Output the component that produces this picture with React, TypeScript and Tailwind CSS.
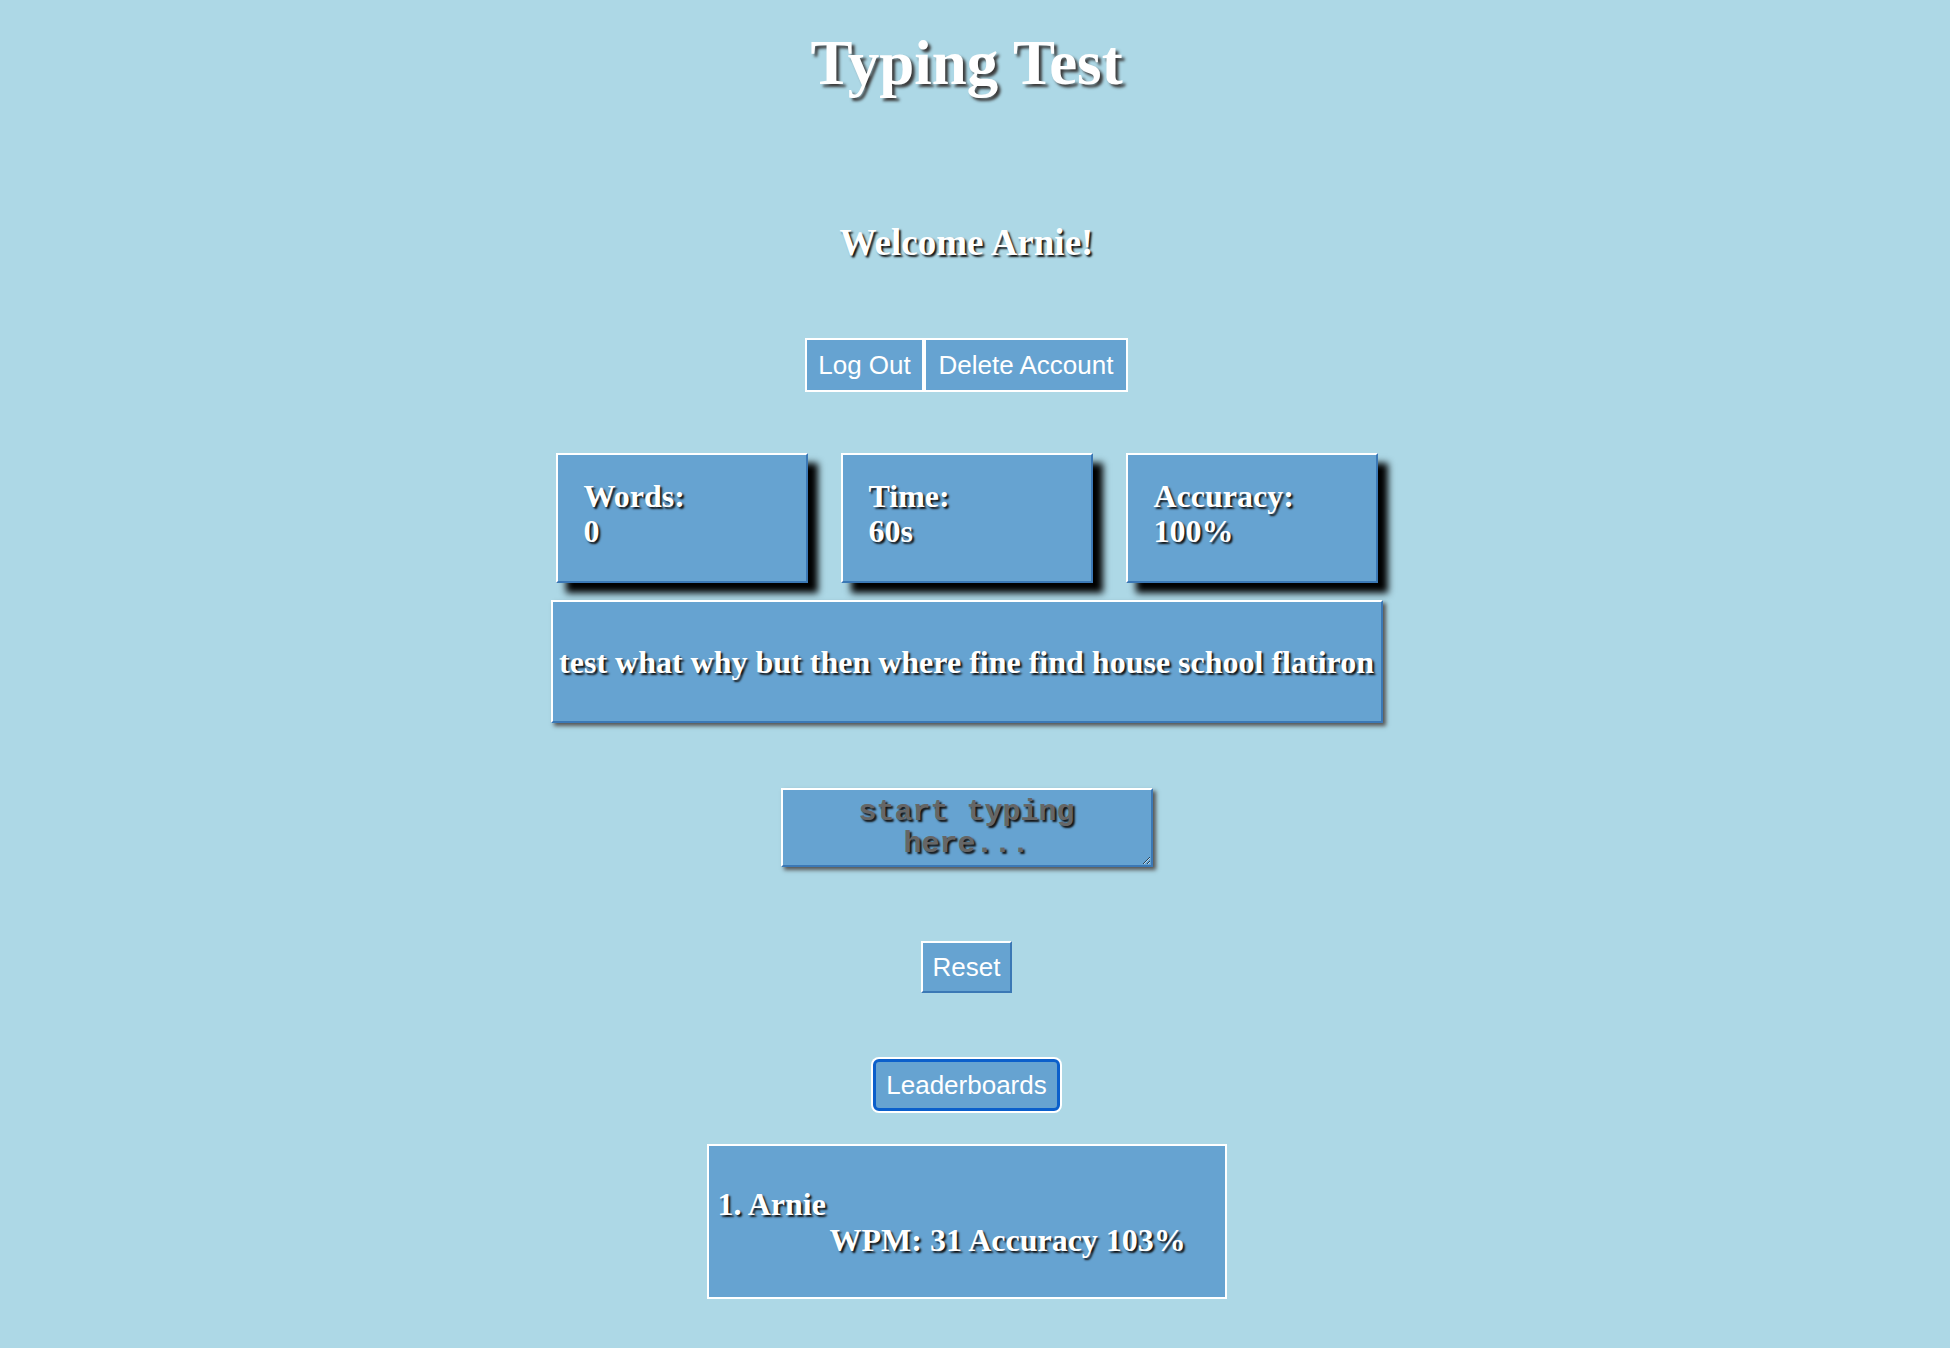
import { useState } from "react";

interface Score {
  name: string;
  wpm: number;
  accuracy: number;
}

const serif = "font-['Liberation_Serif','Times_New_Roman',serif] font-bold";
const sans = "font-['Liberation_Sans',Arial,sans-serif]";
const boxBlue = "bg-[#66a3d1]";
const raised = "border-2 border-t-white border-l-white border-r-[#3b78b5] border-b-[#3b78b5]";
const textShadow = "[text-shadow:2px_2px_2px_#111]";

const TypingTest = () => {
  const [typed, setTyped] = useState<string>("");
  const words = "test what why but then where fine find house school flatiron";
  const scores: Score[] = [{ name: "Arnie", wpm: 31, accuracy: 103 }];

  const stats = [
    { label: "Words:", value: "0" },
    { label: "Time:", value: "60s" },
    { label: "Accuracy:", value: "100%" },
  ];

  return (
    <div className="min-h-screen w-full bg-[#add8e6]">
      <div className="w-[calc(100%-17px)] flex flex-col items-center text-white">
        <h1
          className={`${serif} mt-[32px] text-[63px] leading-none [text-shadow:3px_3px_3px_#3a3a3a]`}
        >
          Typing Test
        </h1>

        <h2 className={`${serif} mt-[129px] text-[37px] leading-none ${textShadow}`}>
          Welcome Arnie!
        </h2>

        {/* cuenta */}
        <div className={`${sans} mt-[77px] flex`}>
          <button className={`${boxBlue} h-[54px] w-[119px] border-2 border-white text-[26px] flex items-center justify-center`}>
            Log Out
          </button>
          <button className={`${boxBlue} h-[54px] w-[204px] border-2 border-white text-[26px] flex items-center justify-center`}>
            Delete Account
          </button>
        </div>

        {/* estadisticas */}
        <div className="mt-[61px] flex gap-[33px]">
          {stats.map((stat) => (
            <div
              key={stat.label}
              className={`${boxBlue} ${raised} ${serif} w-[252px] h-[130px] pl-[26px] pt-[24px] text-[32px] leading-[35px] shadow-[10px_10px_7px_#000] ${textShadow}`}
            >
              <div>{stat.label}</div>
              <div>{stat.value}</div>
            </div>
          ))}
        </div>

        <div
          className={`${boxBlue} ${raised} ${serif} mt-[17px] w-[832px] h-[123px] flex items-center justify-center text-[32px] shadow-[3px_3px_4px_#555] ${textShadow}`}
        >
          {words}
        </div>

        <textarea
          value={typed}
          onChange={(e) => setTyped(e.target.value)}
          placeholder="start typing here..."
          className={`${boxBlue} ${raised} mt-[65px] w-[372px] h-[79px] px-[10px] pt-[6px] text-center font-['Liberation_Mono','Courier_New',monospace] font-bold text-[30px] leading-[32px] text-white placeholder:text-[#666] outline-none shadow-[3px_3px_4px_#555] [text-shadow:2px_2px_2px_#111]`}
        />

        <button
          onClick={() => setTyped("")}
          className={`${boxBlue} ${raised} ${sans} mt-[74px] h-[52px] w-[91px] text-[26px] flex items-center justify-center`}
        >
          Reset
        </button>

        <button
          className={`${boxBlue} ${sans} mt-[66px] h-[52px] w-[187px] rounded-[6px] border-[3px] border-[#0b5fcb] ring-2 ring-white text-[26px] flex items-center justify-center`}
        >
          Leaderboards
        </button>

        {/* tabla de posiciones */}
        <div
          className={`${boxBlue} ${serif} mt-[33px] mb-[49px] w-[520px] h-[155px] border-2 border-white flex flex-col justify-center text-[32px] leading-[36px] ${textShadow}`}
        >
          {scores.map((score, index) => (
            <div key={index}>
              <div className="pl-[9px]">
                {index + 1}. {score.name}
              </div>
              <div className="pl-[121px]">
                WPM: {score.wpm} Accuracy {score.accuracy}%
              </div>
            </div>
          ))}
        </div>
      </div>
    </div>
  );
};

export default TypingTest;
